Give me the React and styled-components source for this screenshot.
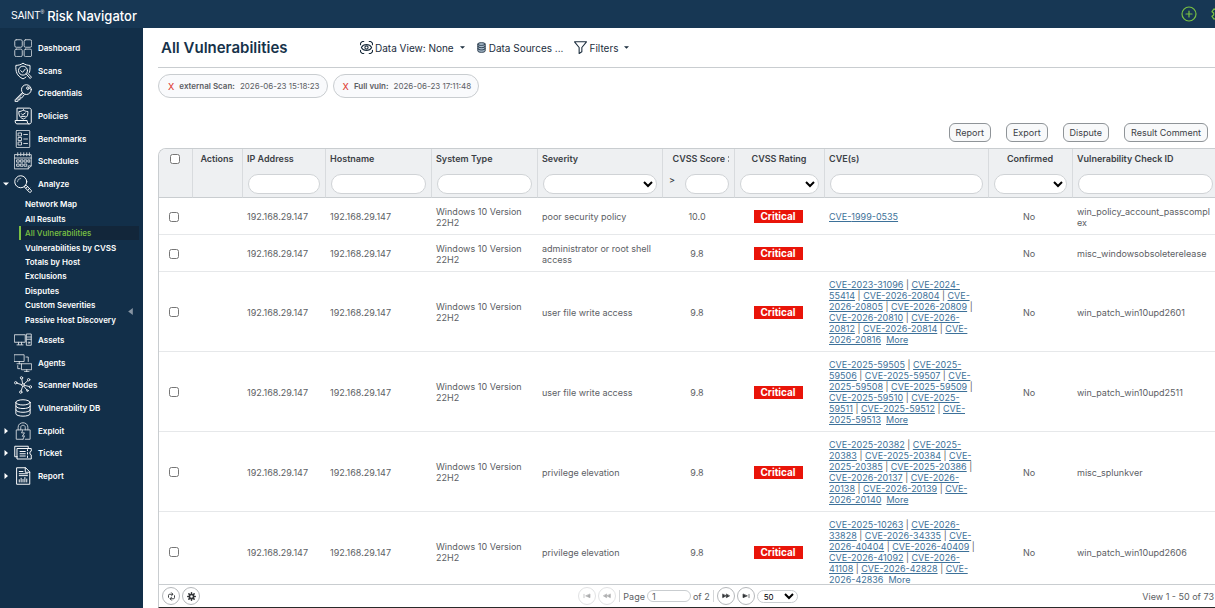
import { useState } from 'react'
import styled, { createGlobalStyle, css } from 'styled-components'

const COLORS = {
  topbar: '#173754',
  sidebar: '#122f49',
  sidebarActive: '#12263a',
  accent: '#7ac143',
  title: '#16324a',
  text: '#5c6064',
  heading: '#3c4146',
  line: '#c9cdd0',
  rowLine: '#e6e8ea',
  head: '#eef0f2',
  link: '#3d7199',
  critical: '#e91409',
}

const GlobalStyle = createGlobalStyle`
  * {
    box-sizing: border-box;
  }
  body {
    margin: 0;
    font-family: Inter, 'Liberation Sans', sans-serif;
    font-size: 9px;
    color: ${COLORS.text};
    background: #fff;
  }
  button, input, select {
    font: inherit;
    color: inherit;
    margin: 0;
  }
`

const Page = styled.div`
  display: flex;
  flex-direction: column;
  height: 100vh;
  overflow: hidden;
`

const TopBar = styled.header`
  display: flex;
  align-items: center;
  justify-content: space-between;
  flex: none;
  height: 28px;
  padding-left: 11px;
  background: ${COLORS.topbar};
  overflow: hidden;
`

const Brand = styled.div`
  display: flex;
  align-items: center;
  gap: 3px;
  padding-top: 4px;
  color: #fff;
  font-size: 13px;
  font-weight: 500;
  line-height: 20px;
  white-space: nowrap;
`

const Logo = styled.span`
  display: flex;
  font-family: 'Liberation Sans Narrow', 'Liberation Sans', sans-serif;
  font-size: 10px;
  font-weight: 400;

  sup {
    font-size: 5px;
    line-height: 12px;
  }
`

const TopActions = styled.div`
  display: flex;
  gap: 14px;
  flex: none;
  margin-right: -12px;
`

const BareButton = styled.button`
  display: flex;
  align-items: center;
  padding: 0;
  border: 0;
  background: none;
  color: ${({ $color }) => $color || 'inherit'};
`

const Body = styled.div`
  display: flex;
  flex: 1;
  min-height: 0;
`

const Sidebar = styled.nav`
  position: relative;
  flex: none;
  width: 143px;
  padding-top: 9px;
  background: ${COLORS.sidebar};
  color: #fff;
  font-size: 8px;
  font-weight: 600;
`

const NavGroup = styled.ul`
  display: grid;
  grid-auto-rows: 1fr;
  height: 158px;
  margin: 0;
  padding: 0;
  list-style: none;
`

const NavLink = styled.a`
  display: grid;
  grid-template-columns: 9px 19px 1fr;
  column-gap: 5px;
  align-items: center;
  height: 100%;
  color: inherit;
  text-decoration: none;

  svg {
    justify-self: start;
  }
  svg:first-child {
    justify-self: end;
  }
`

const SubNav = styled(NavGroup)`
  height: 134px;
  padding: 2px 4px 2px 19px;
`

const SubLink = styled.a`
  display: flex;
  align-items: center;
  height: 100%;
  padding-left: 4px;
  border-left: 2px solid transparent;
  color: inherit;
  text-decoration: none;
  white-space: nowrap;
  ${({ $active }) =>
    $active &&
    css`
      color: ${COLORS.accent};
      border-color: ${COLORS.accent};
      background: ${COLORS.sidebarActive};
      font-weight: 500;
    `}
`

const CollapseButton = styled(BareButton)`
  position: absolute;
  top: 280px;
  right: 9px;
`

const Main = styled.main`
  display: flex;
  flex-direction: column;
  flex: 1;
  min-width: 0;
  padding-left: 15px;
`

const TitleBar = styled.div`
  display: flex;
  align-items: center;
  flex: none;
  height: 40px;
  padding-left: 3px;
  border-bottom: 1px solid ${COLORS.line};
`

const Title = styled.h1`
  width: 199px;
  margin: 0;
  color: ${COLORS.title};
  font-size: 15px;
  font-weight: 600;
`

const ToolButton = styled(BareButton)`
  gap: 2px;
  margin-right: 11px;
  color: #1b2d3d;
  font-size: 10px;
  white-space: nowrap;

  svg:last-child:not(:first-child) {
    margin-left: 4px;
  }
`

const Chips = styled.div`
  display: flex;
  flex: none;
  gap: 5px;
  padding-top: 6px;
`

const Chip = styled.div`
  display: flex;
  align-items: center;
  gap: 5px;
  height: 24px;
  padding: 0 7px 0 9px;
  border: 1px solid ${COLORS.line};
  border-radius: 12px;
  background: #f9fafc;
  font-size: 8px;

  b {
    font-weight: 600;
  }
  button {
    font-size: 9px;
    font-weight: 500;
  }
`

const Actions = styled.div`
  display: flex;
  flex: none;
  justify-content: flex-end;
  gap: 15px;
  padding: 25px 7px 6px 0;
`

const ActionButton = styled.button`
  height: 19px;
  padding: 0 6px;
  border: 1px solid #8f9498;
  border-radius: 6px;
  background: #f8f9fa;
  color: ${COLORS.heading};
`

const Grid = styled.section`
  display: flex;
  flex-direction: column;
  flex: 1;
  min-height: 0;
  border: 1px solid ${COLORS.line};
  border-right: 0;
  border-top-left-radius: 8px;
  border-bottom-color: #2a2a2a;
  overflow: hidden;
`

const GridBody = styled.div`
  flex: 1;
  min-height: 0;
  overflow: hidden;
`

const Table = styled.table`
  width: 100%;
  table-layout: fixed;
  border-collapse: separate;
  border-spacing: 0;
`

const HeadCell = styled.th`
  height: 49px;
  padding: 4px 5px 3px 4px;
  border-right: 1px solid #d8dbde;
  border-bottom: 1px solid ${COLORS.line};
  background: ${COLORS.head};
  color: ${COLORS.heading};
  font-weight: 600;
  line-height: 12px;
  text-align: ${({ $align }) => $align || 'left'};
  vertical-align: top;
  white-space: nowrap;
  overflow: hidden;

  &:last-child {
    border-right: 0;
    padding-right: 2px;
  }
`

const FilterRow = styled.div`
  display: flex;
  justify-content: space-between;
  margin-top: 9px;
  padding-left: 1px;
  font-weight: 500;
`

const Operator = styled.span`
  padding-left: 1px;
`

const fieldStyle = css`
  width: 100%;
  min-width: 0;
  height: 20px;
  border: 1px solid #d0d3d6;
  border-radius: 10px;
  background: #fff;
  color: #000;
`

const FilterInput = styled.input`
  ${fieldStyle}
  padding: 0 6px;
  ${({ $short }) => $short && 'width: 44px;'}
`

const FilterSelect = styled.select`
  ${fieldStyle}
`

const Cell = styled.td`
  height: 37px;
  padding: 7px 8px 6px 4px;
  border-bottom: 1px solid ${COLORS.rowLine};
  line-height: 11px;
  text-align: ${({ $align }) => $align || 'left'};
  vertical-align: middle;
  overflow-wrap: anywhere;

  &:last-child {
    padding-right: 4px;
  }
`

const Check = styled.input`
  display: block;
  width: 10px;
  height: 10px;
  margin: 0 auto;
`

const HeadCheck = styled(Check)`
  margin-top: 1px;
`

const Badge = styled.span`
  display: inline-block;
  width: 49px;
  height: 13px;
  background: ${COLORS.critical};
  color: #fff;
  font-size: 10px;
  font-weight: 700;
  line-height: 13px;
  text-align: center;
  vertical-align: middle;
`

const CveLink = styled.a`
  color: ${COLORS.link};
  text-decoration: underline;
`

const Footer = styled.footer`
  display: grid;
  grid-template-columns: 1fr auto 1fr;
  align-items: center;
  flex: none;
  height: 23px;
  padding: 0 1px 0 3px;
  border-top: 1px solid ${COLORS.line};
`

const FooterGroup = styled.div`
  display: flex;
  align-items: center;
  gap: 2px;
`

const RoundButton = styled.button`
  display: flex;
  align-items: center;
  justify-content: center;
  width: 18px;
  height: 18px;
  padding: 0;
  border: 1px solid #b5b8bb;
  border-radius: 50%;
  background: #fff;
  color: #303336;

  &:disabled {
    opacity: 0.4;
  }
`

const Separator = styled.span`
  width: 1px;
  height: 12px;
  margin: 0 1px;
  background: #d5d7d9;
`

const PageInput = styled.input`
  width: 44px;
  height: 12px;
  padding: 0 4px;
  border: 1px solid ${COLORS.line};
  border-radius: 6px;
`

const PageSize = styled.select`
  width: 41px;
  height: 13px;
  padding: 0 2px;
  border: 1px solid ${COLORS.line};
  border-radius: 7px;
  background: #fff;
  color: #000;
  font-size: 8px;
`

const ViewInfo = styled.span`
  text-align: right;
`

const Icon = ({ size = 18, width = 1.3, children }) => (
  <svg
    width={size}
    height={size}
    viewBox="0 0 24 24"
    fill="none"
    stroke="currentColor"
    strokeWidth={width}
    strokeLinejoin="round"
    strokeLinecap="round"
    aria-hidden="true"
  >
    {children}
  </svg>
)

const Triangle = ({ d, size = 6 }) => (
  <svg width={size} height={size} viewBox="0 0 6 6" fill="currentColor" aria-hidden="true">
    <path d={d} />
  </svg>
)

const DOWN = 'M0 1.5h6l-3 3z'
const RIGHT = 'M1.5 0v6l3.5-3z'
const LEFT = 'M5 0v6l-4-3z'

const ICONS = {
  dashboard: (
    <g opacity="0.75">
      <rect x="1" y="1" width="10" height="10" rx="2" />
      <rect x="13.5" y="1" width="10" height="10" rx="2" />
      <rect x="1" y="13.5" width="10" height="10" rx="2" />
      <rect x="13.5" y="13.5" width="10" height="10" rx="2" />
    </g>
  ),
  scans: (
    <>
      <path d="M20.5 14c1-3 1-6 .8-9.5C18 4.5 14.5 3.5 12 1.5 9.5 3.5 6 4.5 2.5 4.5c-.4 8 1 14 9.5 18 1.5-.6 2.8-1.4 4-2.5" />
      <circle cx="12" cy="11.5" r="6" />
      <path d="m9 11.5 2.300 2.300L15 9.500M16.300 16l5.200 6 1.800-1.800-5.400-5.700" />
    </>
  ),
  credentials: (
    <>
      <circle cx="16.5" cy="7.5" r="6.5" />
      <circle cx="18.5" cy="5.5" r="1.7" />
      <path d="M11 11.5 1.500 21v2.500H5l.5-2.500H8v-2.500h2.500l3-4" />
      <path d="m12 12.5-9 9" />
    </>
  ),
  policies: (
    <>
      <path d="M4 18V1.500h16.500c1.500 0 2.500 1 2.500 2.500v16c0 1.500-1 2.500-2.500 2.500H4c-1.500 0-2.500-1.500-2.500-4.500h16c0 3 1 4.500 2.500 4.500" />
      <path d="M12.500 4c2 1.500 4 2 6 2 .2 5-1 8-6 10-5-2-6.200-5-6-10 2 0 4-.5 6-2z" />
      <path d="m10 9 1.500 1.500L15 8M10 12.500h5" />
    </>
  ),
  benchmarks: (
    <g opacity="0.8">
      <rect x="3" y="0.5" width="18" height="23" rx="1" />
      <path d="M6 4h4v4H6zM6 10h4v4H6zM6 16h4v4H6zM13 6h5M13 12h5M13 18h5" />
    </g>
  ),
  schedules: (
    <g opacity="0.8">
      <path d="M1 3.500h22v15l-4 4H1zM1 8h22M19 22.500v-4h4" />
      <path d="M5 1v4M9 1v4M13 1v4M17 1v4M20.500 1v4" />
      <path d="M4 10.500h3v3H4zM9 10.500h3v3H9zM14 10.500h3v3h-3zM19 10.500h2v3h-2zM4 16h3v3H4zM9 16h3v3H9zM14 16h3v3h-3z" />
    </g>
  ),
  analyze: (
    <>
      <circle cx="9" cy="9" r="8" />
      <path d="M4.500 9A4.500 4.500 0 0 1 9 4.500" opacity="0.6" />
      <path d="m14.500 15 1.500-1.500 7 7c.8 1.500-1 3.300-2.500 2.500l-6.500-7zM16 17.500l2.500-2.500M18.500 20l2.500-2.500" />
    </>
  ),
  assets: (
    <g opacity="0.8">
      <path d="M1 5h14v10H1zM6 15v3M10 15v3M4 18.500h8M17 4h6v15h-6zM17 8h6M17 11h6" />
      <circle cx="20" cy="15.5" r="1" />
    </g>
  ),
  agents: (
    <g opacity="0.75">
      <path d="M0.500 1h13v9h-13zM4 13h6M7 10v3M10.500 13h13v8h-13zM14 23.500h6M17 21v2.500M16 4h3v6M5 15.500v4h3" />
    </g>
  ),
  nodes: (
    <g opacity="0.9">
      <circle cx="12" cy="12" r="1.8" />
      <circle cx="10" cy="2.5" r="1.6" />
      <circle cx="19.5" cy="5" r="1.6" />
      <circle cx="2.3" cy="9" r="1.6" />
      <circle cx="22" cy="14.5" r="1.6" />
      <circle cx="9" cy="21.5" r="1.6" />
      <circle cx="18" cy="19.5" r="1.1" />
      <path d="m10.400 4 1 6M18.200 6.300l-4.700 4.300M4 9.700l6 1.700M20.300 14l-6.300-1.500M9.500 20l1.900-6M17.200 18.700l-4-5" />
    </g>
  ),
  database: (
    <>
      <ellipse cx="12" cy="4.5" rx="9.5" ry="3.5" />
      <path d="M2.500 4.500v15c0 4.500 19 4.500 19 0v-15M2.500 9.500c0 4.500 19 4.500 19 0M2.500 14.500c0 4.500 19 4.500 19 0" />
    </>
  ),
  exploit: (
    <g opacity="0.75">
      <path d="M12 10.500H3V23h9M14 10.500h7.500V23H15M5.500 10.500V7c0-8 13-8 13 0v3.500M9 10.500V7c0-3.500 6-3.500 6 0v3.500" />
      <path d="m12 10.500-2 4h4l-3 4.500 3-.5-2 4.500" />
    </g>
  ),
  ticket: (
    <>
      <path d="M4.500 17H1V3h18v3" />
      <path d="M4.500 6H23v3.500c-2.500 0-2.500 5 0 5V20H4.500zM8 10h7M8 13h7M8 16h7M18 7.500v1.500M18 11.500v2M18 16v2" />
    </>
  ),
  report: (
    <>
      <path d="M4 1h11.500L21 6.500V23H4zM15 1v6h6" />
      <path d="M7 6h5M7 9h11M7 11.500h11M7 20v-3M9.500 20v-5M12 20v-3.500M14.500 20v-6M17 20v-4" />
    </>
  ),
}

const NAV_TOP = [
  { icon: 'dashboard', label: 'Dashboard' },
  { icon: 'scans', label: 'Scans' },
  { icon: 'credentials', label: 'Credentials' },
  { icon: 'policies', label: 'Policies' },
  { icon: 'benchmarks', label: 'Benchmarks' },
  { icon: 'schedules', label: 'Schedules' },
  { icon: 'analyze', label: 'Analyze', arrow: DOWN },
]

const NAV_SUB = [
  'Network Map',
  'All Results',
  'All Vulnerabilities',
  'Vulnerabilities by CVSS',
  'Totals by Host',
  'Exclusions',
  'Disputes',
  'Custom Severities',
  'Passive Host Discovery',
]

const NAV_BOTTOM = [
  { icon: 'assets', label: 'Assets' },
  { icon: 'agents', label: 'Agents' },
  { icon: 'nodes', label: 'Scanner Nodes' },
  { icon: 'database', label: 'Vulnerability DB' },
  { icon: 'exploit', label: 'Exploit', arrow: RIGHT },
  { icon: 'ticket', label: 'Ticket', arrow: RIGHT },
  { icon: 'report', label: 'Report', arrow: RIGHT },
]

const COLUMNS = [
  { label: '', width: 34 },
  { label: 'Actions', width: 50, align: 'center' },
  { label: 'IP Address', width: 83, filter: 'text' },
  { label: 'Hostname', width: 106, filter: 'text' },
  { label: 'System Type', width: 106, filter: 'text' },
  { label: 'Severity', width: 125, filter: 'select' },
  { label: 'CVSS Score', width: 72, filter: 'score', align: 'right', sorted: true },
  { label: 'CVSS Rating', width: 90, filter: 'select', align: 'center' },
  { label: 'CVE(s)', width: 164, filter: 'text' },
  { label: 'Confirmed', width: 84, filter: 'select', align: 'center' },
  { label: 'Vulnerability Check ID', filter: 'text' },
]

const IP = '192.168.29.147'
const SYSTEM = 'Windows 10 Version 22H2'

const ROWS = [
  {
    severity: 'poor security policy',
    score: '10.0',
    cves: ['1999-0535'],
    check: 'win_policy_account_passcomplex',
  },
  {
    severity: 'administrator or root shell access',
    score: '9.8',
    cves: [],
    check: 'misc_windowsobsoleterelease',
  },
  {
    severity: 'user file write access',
    score: '9.8',
    cves: ['2023-31096', '2024-55414', '2026-20804', '2026-20805', '2026-20809', '2026-20810', '2026-20812', '2026-20814', '2026-20816'],
    more: true,
    check: 'win_patch_win10upd2601',
  },
  {
    severity: 'user file write access',
    score: '9.8',
    cves: ['2025-59505', '2025-59506', '2025-59507', '2025-59508', '2025-59509', '2025-59510', '2025-59511', '2025-59512', '2025-59513'],
    more: true,
    check: 'win_patch_win10upd2511',
  },
  {
    severity: 'privilege elevation',
    score: '9.8',
    cves: ['2025-20382', '2025-20383', '2025-20384', '2025-20385', '2025-20386', '2026-20137', '2026-20138', '2026-20139', '2026-20140'],
    more: true,
    check: 'misc_splunkver',
  },
  {
    severity: 'privilege elevation',
    score: '9.8',
    cves: ['2025-10263', '2026-33828', '2026-34335', '2026-40404', '2026-40409', '2026-41092', '2026-41108', '2026-42828', '2026-42836'],
    more: true,
    check: 'win_patch_win10upd2606',
  },
]

const renderNavItem = ({ icon, label, arrow }) => (
  <li key={label}>
    <NavLink href="#">
      {arrow ? <Triangle d={arrow} /> : <span />}
      <Icon>{ICONS[icon]}</Icon>
      {label}
    </NavLink>
  </li>
)

const SortMark = () => (
  <svg width="4" height="6" viewBox="0 0 4 6" fill="#8f9498" aria-hidden="true">
    <path d="M3 0v2h1V0zM3 4v2h1V4z" />
  </svg>
)

const renderFilter = ({ filter, label }) => {
  if (!filter) return null
  return (
    <FilterRow>
      {filter === 'score' && <Operator>&gt;</Operator>}
      {filter === 'select' ? (
        <FilterSelect aria-label={label}>
          <option />
        </FilterSelect>
      ) : (
        <FilterInput aria-label={label} $short={filter === 'score'} />
      )}
    </FilterRow>
  )
}

const CveList = ({ cves, more }) => (
  <>
    {cves.map((cve, i) => (
      <span key={cve}>
        {i > 0 && '\u00a0| '}
        <CveLink href="#">CVE-{cve}</CveLink>
      </span>
    ))}
    {more && (
      <>
        {' \u00a0'}
        <CveLink href="#">More</CveLink>
      </>
    )}
  </>
)

const VulnerabilityTable = () => (
  <Table>
    <colgroup>
      {COLUMNS.map(({ label, width }) => (
        <col key={label} width={width} />
      ))}
    </colgroup>
    <thead>
      <tr>
        {COLUMNS.map((column) => (
          <HeadCell key={column.label} $align={column.align}>
            {column.label || <HeadCheck type="checkbox" aria-label="Select all" />}
            {column.sorted && <SortMark />}
            {renderFilter(column)}
          </HeadCell>
        ))}
      </tr>
    </thead>
    <tbody>
      {ROWS.map((row) => (
        <tr key={row.check}>
          <Cell>
            <Check type="checkbox" aria-label={`Select ${row.check}`} />
          </Cell>
          <Cell />
          <Cell>{IP}</Cell>
          <Cell>{IP}</Cell>
          <Cell>{SYSTEM}</Cell>
          <Cell>{row.severity}</Cell>
          <Cell $align="center">{row.score}</Cell>
          <Cell $align="center">
            <Badge>Critical</Badge>
          </Cell>
          <Cell>
            <CveList cves={row.cves} more={row.more} />
          </Cell>
          <Cell $align="center">No</Cell>
          <Cell>{row.check}</Cell>
        </tr>
      ))}
    </tbody>
  </Table>
)

const Pager = () => {
  const [page, setPage] = useState('1')
  return (
    <FooterGroup>
      <RoundButton disabled aria-label="First page">
        <Icon size={8} width={2}>
          <path d="M3 7v10M21 7v10l-12-5z" fill="currentColor" />
        </Icon>
      </RoundButton>
      <RoundButton disabled aria-label="Previous page">
        <Icon size={8} width={2}>
          <path d="M11 7v10L2 12zM22 7v10l-9-5z" fill="currentColor" />
        </Icon>
      </RoundButton>
      <Separator />
      <label htmlFor="page">Page</label>
      <PageInput id="page" value={page} onChange={(e) => setPage(e.target.value)} />
      <span>of 2</span>
      <Separator />
      <RoundButton aria-label="Next page">
        <Icon size={8} width={2}>
          <path d="M2 7v10l9-5zM13 7v10l9-5z" fill="currentColor" />
        </Icon>
      </RoundButton>
      <RoundButton aria-label="Last page">
        <Icon size={8} width={2}>
          <path d="M3 7v10l12-5zM21 7v10" fill="currentColor" />
        </Icon>
      </RoundButton>
      <PageSize aria-label="Rows per page">
        <option>50</option>
      </PageSize>
    </FooterGroup>
  )
}

const App = () => (
  <Page>
    <GlobalStyle />
    <TopBar>
      <Brand>
        <Logo>
          SAINT<sup>®</sup>
        </Logo>
        Risk Navigator
      </Brand>
      <TopActions>
        <BareButton $color={COLORS.accent} aria-label="Add">
          <Icon size={16} width={1.8}>
            <circle cx="12" cy="12" r="10.5" />
            <path d="M12 7.500v9M7.500 12h9" />
          </Icon>
        </BareButton>
        <BareButton $color={COLORS.accent} aria-label="Settings">
          <Icon size={16} width={1.8}>
            <path d="M9.500 1.500h5v3.500l2 1 3-1.800 3 4.300-2.500 2v3l2.500 2-3 4.300-3-1.800-2 1v3.500h-5V19l-2-1-3 1.800-3-4.300 2.500-2v-3l-2.500-2 3-4.300 3 1.800 2-1z" />
            <circle cx="12" cy="12" r="3.5" />
          </Icon>
        </BareButton>
      </TopActions>
    </TopBar>
    <Body>
      <Sidebar>
        <NavGroup>{NAV_TOP.map(renderNavItem)}</NavGroup>
        <SubNav>
          {NAV_SUB.map((label) => (
            <li key={label}>
              <SubLink href="#" $active={label === 'All Vulnerabilities'}>
                {label}
              </SubLink>
            </li>
          ))}
        </SubNav>
        <NavGroup>{NAV_BOTTOM.map(renderNavItem)}</NavGroup>
        <CollapseButton $color="#8795a3" aria-label="Collapse menu">
          <Triangle d={LEFT} size={7} />
        </CollapseButton>
      </Sidebar>
      <Main>
        <TitleBar>
          <Title>All Vulnerabilities</Title>
          <ToolButton>
            <Icon size={13} width={2}>
              <path d="M1 7V4l3-3h3M17 1h3l3 3v3M1 17v3l3 3h3M17 23h3l3-3v-3M2.500 12c4-7.500 15-7.500 19 0-4 7.500-15 7.500-19 0z" />
              <circle cx="12" cy="12" r="3" />
            </Icon>
            Data View: None
            <Triangle d={DOWN} size={5} />
          </ToolButton>
          <ToolButton>
            <Icon size={11} width={2}>
              <path
                d="M4 4.500v15c0 4 16 4 16 0v-15c0-4-16-4-16 0c0 4 16 4 16 0M4 9.500c0 4 16 4 16 0M4 14.500c0 4 16 4 16 0"
                fill="#a9bccd"
              />
            </Icon>
            Data Sources ...
          </ToolButton>
          <ToolButton>
            <Icon size={13} width={2}>
              <path d="M1 1.500h22l-8.500 10.500V20l-5 3V12z" />
            </Icon>
            Filters
            <Triangle d={DOWN} size={5} />
          </ToolButton>
        </TitleBar>
        <Chips>
          <Chip>
            <BareButton $color="#e0453a" aria-label="Remove external Scan">X</BareButton>
            <b>external Scan:</b> 2026-06-23 15:18:23
          </Chip>
          <Chip>
            <BareButton $color="#e0453a" aria-label="Remove Full vuln">X</BareButton>
            <b>Full vuln:</b> 2026-06-23 17:11:48
          </Chip>
        </Chips>
        <Actions>
          <ActionButton>Report</ActionButton>
          <ActionButton>Export</ActionButton>
          <ActionButton>Dispute</ActionButton>
          <ActionButton>Result Comment</ActionButton>
        </Actions>
        <Grid>
          <GridBody>
            <VulnerabilityTable />
          </GridBody>
          <Footer>
            <FooterGroup>
              <RoundButton aria-label="Refresh">
                <Icon size={9} width={2.5}>
                  <path d="M4 14V9c0-2 1-3 3-3h8M12 2l4 4-4 4M20 10v5c0 2-1 3-3 3H9M12 14l-4 4 4 4" />
                </Icon>
              </RoundButton>
              <RoundButton aria-label="Columns">
                <Icon size={9} width={4}>
                  <circle cx="12" cy="12" r="5.5" />
                  <path d="M12 2v3M12 19v3M2 12h3M19 12h3M5 5l2 2M17 17l2 2M5 19l2-2M17 7l2-2" />
                </Icon>
              </RoundButton>
            </FooterGroup>
            <Pager />
            <ViewInfo>View 1 - 50 of 73</ViewInfo>
          </Footer>
        </Grid>
      </Main>
    </Body>
  </Page>
)

export default App
